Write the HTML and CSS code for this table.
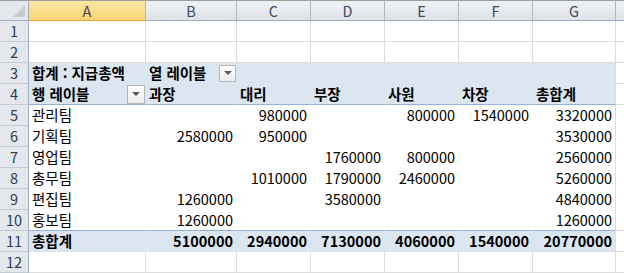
FILE: index.html
```html
<!DOCTYPE html>
<html lang="ko">
<head>
<meta charset="utf-8">
<link rel="stylesheet" href="styles.css">
</head>
<body>
<table class="sheet">
  <colgroup>
    <col class="w-rh"><col class="w-a"><col class="w-b"><col class="w-n"><col class="w-n"><col class="w-n"><col class="w-n"><col class="w-g"><col class="w-h">
  </colgroup>
  <thead>
    <tr class="colhead">
      <th class="corner"><span class="tri"></span></th>
      <th class="sel">A</th><th>B</th><th>C</th><th>D</th><th>E</th><th>F</th><th>G</th><th class="edge"></th>
    </tr>
  </thead>
  <tbody>
    <tr><th>1</th><td></td><td></td><td></td><td></td><td></td><td></td><td></td><td></td></tr>
    <tr><th>2</th><td></td><td></td><td></td><td></td><td></td><td></td><td></td><td></td></tr>
    <tr class="pv-head">
      <th>3</th>
      <td class="b">합계 : 지급총액</td>
      <td class="b"><div class="lbl">열 레이블<span class="dd"></span></div></td>
      <td></td><td></td><td></td><td></td><td class="last"></td><td class="out"></td>
    </tr>
    <tr class="pv-head pv-line">
      <th>4</th>
      <td class="b"><div class="lbl wide">행 레이블<span class="dd big"></span></div></td>
      <td class="b">과장</td><td class="b">대리</td><td class="b">부장</td><td class="b">사원</td><td class="b">차장</td><td class="b last">총합계</td><td class="out"></td>
    </tr>
    <tr class="pv"><th>5</th><td>관리팀</td><td class="r"></td><td class="r">980000</td><td class="r"></td><td class="r">800000</td><td class="r">1540000</td><td class="r last">3320000</td><td class="out"></td></tr>
    <tr class="pv"><th>6</th><td>기획팀</td><td class="r">2580000</td><td class="r">950000</td><td class="r"></td><td class="r"></td><td class="r"></td><td class="r last">3530000</td><td class="out"></td></tr>
    <tr class="pv"><th>7</th><td>영업팀</td><td class="r"></td><td class="r"></td><td class="r">1760000</td><td class="r">800000</td><td class="r"></td><td class="r last">2560000</td><td class="out"></td></tr>
    <tr class="pv"><th>8</th><td>총무팀</td><td class="r"></td><td class="r">1010000</td><td class="r">1790000</td><td class="r">2460000</td><td class="r"></td><td class="r last">5260000</td><td class="out"></td></tr>
    <tr class="pv"><th>9</th><td>편집팀</td><td class="r">1260000</td><td class="r"></td><td class="r">3580000</td><td class="r"></td><td class="r"></td><td class="r last">4840000</td><td class="out"></td></tr>
    <tr class="pv"><th>10</th><td>홍보팀</td><td class="r">1260000</td><td class="r"></td><td class="r"></td><td class="r"></td><td class="r"></td><td class="r last">1260000</td><td class="out"></td></tr>
    <tr class="pv-total"><th>11</th><td class="b">총합계</td><td class="b r">5100000</td><td class="b r">2940000</td><td class="b r">7130000</td><td class="b r">4060000</td><td class="b r">1540000</td><td class="b r last">20770000</td><td class="out"></td></tr>
    <tr><th>12</th><td></td><td></td><td></td><td></td><td></td><td></td><td></td><td></td></tr>
  </tbody>
</table>
</body>
</html>
```
FILE: styles.css
```css
html, body {
  margin: 0;
  padding: 0;
  background: #ffffff;
  overflow: hidden;
}
.sheet {
  border-collapse: separate;
  border-spacing: 0;
  table-layout: fixed;
  width: 640px;
  font-family: "Noto Sans CJK KR", "Malgun Gothic", sans-serif;
  font-size: 14.5px;
  color: #000;
}
.w-rh { width: 29px; }
.w-a { width: 117px; }
.w-b { width: 91px; }
.w-n { width: 74px; }
.w-g { width: 83px; }
.w-h { width: 24px; }

.sheet td, .sheet th {
  height: 20px;
  padding: 0 3px;
  border-right: 1px solid #dadcdd;
  border-bottom: 1px solid #dadcdd;
  white-space: nowrap;
  overflow: hidden;
  line-height: 20px;
  text-align: left;
  font-weight: normal;
  vertical-align: middle;
  box-sizing: content-box;
}
.sheet tbody th {
  background: #e4e8ed;
  color: #2b3c55;
  text-align: center;
  border-right: 1px solid #9eadbf;
  border-bottom: 1px solid #c1c9d3;
  padding: 0;
  font-size: 14.5px;
}
.colhead th {
  background: linear-gradient(#eef1f4, #dfe3e8);
  color: #3b4a5f;
  text-align: center;
  border-top: 1px solid #9c9c9c;
  border-right: 1px solid #b2b8c0;
  border-bottom: 1px solid #9eadbf;
  height: 19px;
  line-height: 19px;
  padding: 0;
  font-size: 14.5px;
}
.colhead th.sel {
  background: linear-gradient(#fbe6a3, #f8d575);
  border-right-color: #e3b45a;
  border-bottom-color: #f1a33a;
  color: #444;
}
.colhead th.corner {
  position: relative;
  background: #e4e8ed;
  border-right-color: #9eadbf;
}
.tri {
  position: absolute;
  right: 3px;
  bottom: 3px;
  width: 0;
  height: 0;
  border-left: 12px solid transparent;
  border-bottom: 12px solid #c8ccd1;
}
.colhead th.edge {
  border-right: none;
}

.sheet td.b { font-weight: bold; }
.sheet td.r { text-align: right; }

.pv-head td, .pv-total td {
  background: #dce6f1;
  border-right-color: #dce6f1;
  border-bottom-color: #dce6f1;
}
.pv td {
  border-right-color: #ffffff;
  border-bottom-color: #ffffff;
}
.sheet td.last {
  border-right-color: #dadcdd;
}
.pv-line td {
  border-bottom-color: #95b3d7;
}
.pv-line td.out {
  border-bottom-color: #dadcdd;
}
.pv-head td.out, .pv-total td.out {
  background: #fff;
  border-right-color: #dadcdd;
  border-bottom-color: #dadcdd;
}
.pv:nth-child(10) td {
  border-bottom-color: #95b3d7;
}
.pv:nth-child(10) td.out {
  border-bottom-color: #dadcdd;
}
.pv-total td {
  border-bottom-color: #dadcdd;
}
.pv-total td.b:not(.last) {
  border-bottom-color: #dce6f1;
}

.lbl {
  display: flex;
  align-items: center;
  height: 20px;
}
.lbl .dd {
  margin-left: 13px;
}
.lbl.wide {
  justify-content: space-between;
  margin-right: -3px;
}
.dd {
  display: inline-block;
  position: relative;
  width: 15px;
  height: 15px;
  border: 1px solid #b3b6ba;
  background: linear-gradient(#ffffff, #eceef0);
  box-sizing: content-box;
  flex: none;
}
.dd.big {
  width: 16px;
  height: 17px;
}
.dd::after {
  content: "";
  position: absolute;
  left: 50%;
  top: 50%;
  margin-left: -4px;
  margin-top: -2px;
  border-left: 4px solid transparent;
  border-right: 4px solid transparent;
  border-top: 4px solid #5a5a5a;
}
```
